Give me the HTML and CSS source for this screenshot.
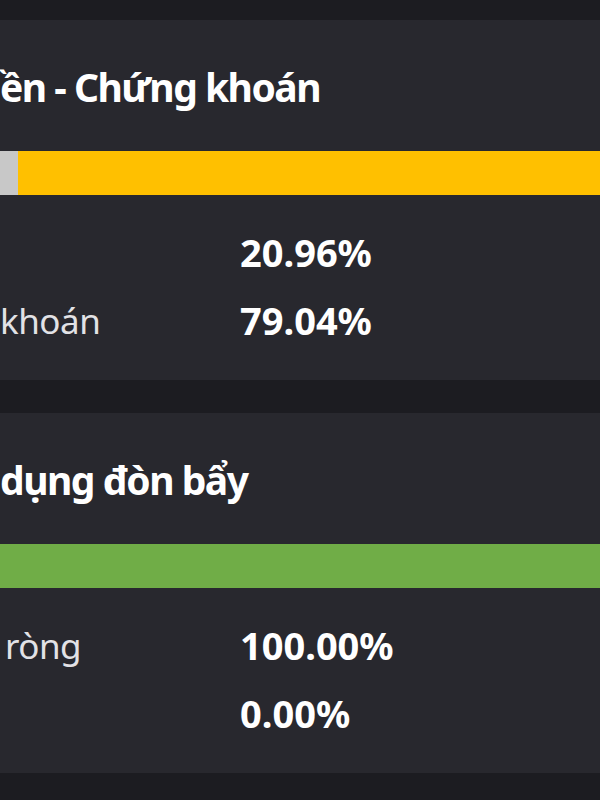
FILE: index.html
```html
<!DOCTYPE html>
<html lang="vi">
  <head>
    <title>Tỷ lệ tài sản</title>
    <meta charset="utf-8" />
    <meta name="viewport" content="width=device-width, initial-scale=1.0" />

    <link rel="stylesheet" href="styles.css">
  </head>
  <body>
    <main class="screen">
      <section class="card">
        <h2 class="card-title">ền - Chứng khoán</h2>
        <div class="bar">
          <div class="bar-part bar-cash"></div>
          <div class="bar-part bar-stock"></div>
        </div>
        <div class="row">
          <span class="row-label"></span>
          <span class="row-value">20.96%</span>
        </div>
        <div class="row">
          <span class="row-label">khoán</span>
          <span class="row-value">79.04%</span>
        </div>
      </section>

      <section class="card">
        <h2 class="card-title">dụng đòn bẩy</h2>
        <div class="bar">
          <div class="bar-part bar-equity"></div>
        </div>
        <div class="row">
          <span class="row-label row-label-indent">ròng</span>
          <span class="row-value">100.00%</span>
        </div>
        <div class="row">
          <span class="row-label"></span>
          <span class="row-value">0.00%</span>
        </div>
      </section>
    </main>
  </body>
</html>
```

FILE: styles.css
```css
html,
body {
  margin: 0;
  height: 100%;
  overflow: hidden;
  background-color: #1c1c21;
}

body {
  font-family: "Noto Sans", "Open Sans", sans-serif;
  color: #fff;
}

.screen {
  display: flex;
  flex-direction: column;
  gap: 33px;
  padding-top: 20px;
}

.card {
  display: flex;
  flex-direction: column;
  background-color: #28282e;
  padding: 39px 0 26px 0;
}

.card-title {
  margin: 0;
  font-size: 39px;
  font-weight: 700;
  line-height: 56px;
  letter-spacing: -1.5px;
  white-space: nowrap;
}

.bar {
  display: flex;
  height: 44px;
  margin: 36px 0 23px 0;
}

.bar-part {
  height: 100%;
}

.bar-cash {
  width: 18px;
  background-color: #c8c8c8;
}

.bar-stock {
  flex-grow: 1;
  background-color: #ffc000;
}

.bar-equity {
  flex-grow: 1;
  background-color: #70ad47;
}

.row {
  display: grid;
  grid-template-columns: 240px 1fr;
  align-items: center;
  height: 68px;
  white-space: nowrap;
}

.row-label {
  font-size: 35px;
  color: #e2e2e6;
  letter-spacing: -0.5px;
}

.row-label-indent {
  padding-left: 5px;
}

.row-value {
  font-size: 38px;
  font-weight: 700;
}
```
